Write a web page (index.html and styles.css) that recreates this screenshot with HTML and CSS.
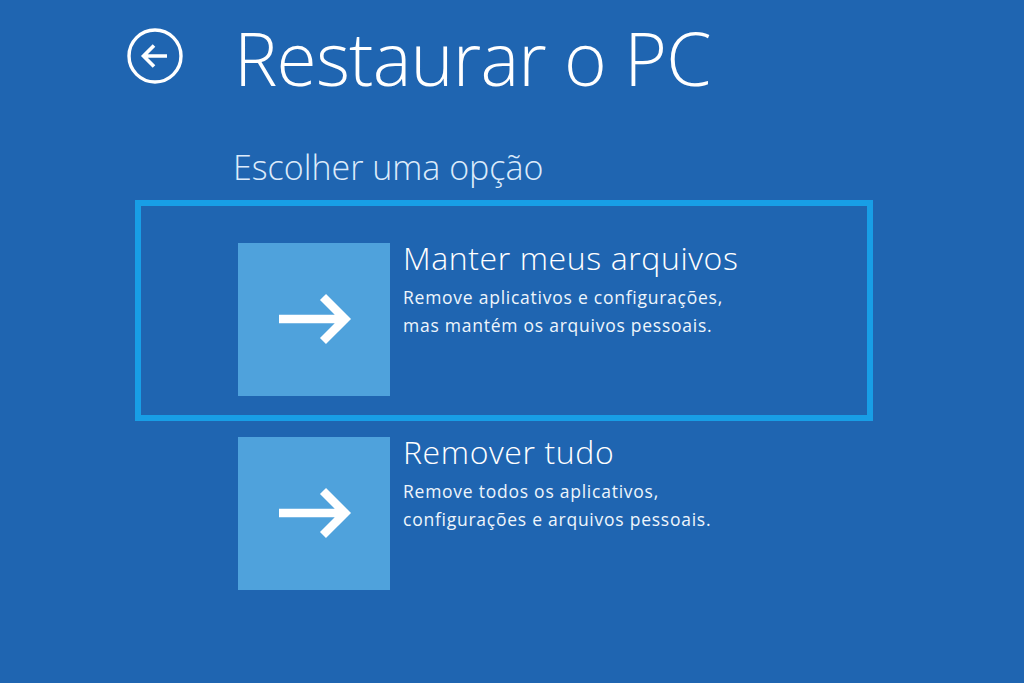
FILE: index.html
```html
<!DOCTYPE html>
<html lang="pt">
<head>
<meta charset="utf-8">
<link rel="stylesheet" href="styles.css">
</head>
<body>
<div class="page">
  <header class="header">
    <svg class="back" viewBox="0 0 58 58" width="58" height="58">
      <circle cx="29" cy="29" r="26" fill="none" stroke="#fff" stroke-width="3.4"/>
      <path d="M41 29 H18 M28 18.5 L17.5 29 L28 39.5" fill="none" stroke="#fff" stroke-width="3.6" stroke-linecap="butt" stroke-linejoin="miter"/>
    </svg>
    <h1 class="title">Restaurar o PC</h1>
  </header>
  <main class="content">
    <h2 class="subtitle">Escolher uma opção</h2>
    <div class="options">
      <div class="option selected">
        <div class="tile">
          <svg viewBox="0 0 74 54" width="74" height="54">
            <path d="M0 27 H64 M44 5 L66 27 L44 49" fill="none" stroke="#fff" stroke-width="8.5" stroke-linejoin="miter"/>
          </svg>
        </div>
        <div class="text">
          <div class="opt-title">Manter meus arquivos</div>
          <div class="opt-desc">Remove aplicativos e configurações,<br>mas mantém os arquivos pessoais.</div>
        </div>
      </div>
      <div class="option">
        <div class="tile">
          <svg viewBox="0 0 74 54" width="74" height="54">
            <path d="M0 27 H64 M44 5 L66 27 L44 49" fill="none" stroke="#fff" stroke-width="8.5" stroke-linejoin="miter"/>
          </svg>
        </div>
        <div class="text">
          <div class="opt-title">Remover tudo</div>
          <div class="opt-desc">Remove todos os aplicativos,<br>configurações e arquivos pessoais.</div>
        </div>
      </div>
    </div>
  </main>
</div>
</body>
</html>
```
FILE: styles.css
```css
html, body {
  margin: 0;
  padding: 0;
  height: 100%;
}
body {
  background: #1f65b1;
  color: #fff;
  font-family: "Open Sans", "Noto Sans", "DejaVu Sans", sans-serif;
  overflow: hidden;
}
.page {
  padding: 20px 0 0 126px;
}
.header {
  display: flex;
  align-items: center;
  gap: 50px;
  height: 76px;
}
.back {
  display: block;
  margin-top: -4px;
}
.title {
  margin: 0;
  font-weight: 300;
  font-size: 73px;
  line-height: 76px;
  letter-spacing: -0.8px;
}
.content {
  padding-left: 9px;
}
.subtitle {
  margin: 50px 0 0 98px;
  font-weight: 300;
  font-size: 34px;
  line-height: 42px;
  color: #dcebfb;
}
.options {
  margin-top: 12px;
  display: flex;
  flex-direction: column;
  gap: 16px;
}
.option {
  display: flex;
  gap: 13px;
  width: 738px;
  box-sizing: border-box;
  padding: 0 0 0 103px;
}
.option.selected {
  border: 6px solid #189ee6;
  padding: 37px 0 19px 97px;
}
.tile {
  width: 152px;
  height: 153px;
  background: #4fa2dc;
  display: flex;
  align-items: center;
  justify-content: center;
  flex-shrink: 0;
}
.tile svg {
  display: block;
  margin-left: 4px;
  margin-top: -2px;
}
.opt-title {
  font-weight: 300;
  font-size: 32px;
  line-height: 36px;
  letter-spacing: 0.6px;
  margin-top: -3px;
}
.opt-desc {
  margin-top: 7px;
  font-size: 17.5px;
  line-height: 28px;
  letter-spacing: 0.75px;
  color: #eef5fc;
}
```
